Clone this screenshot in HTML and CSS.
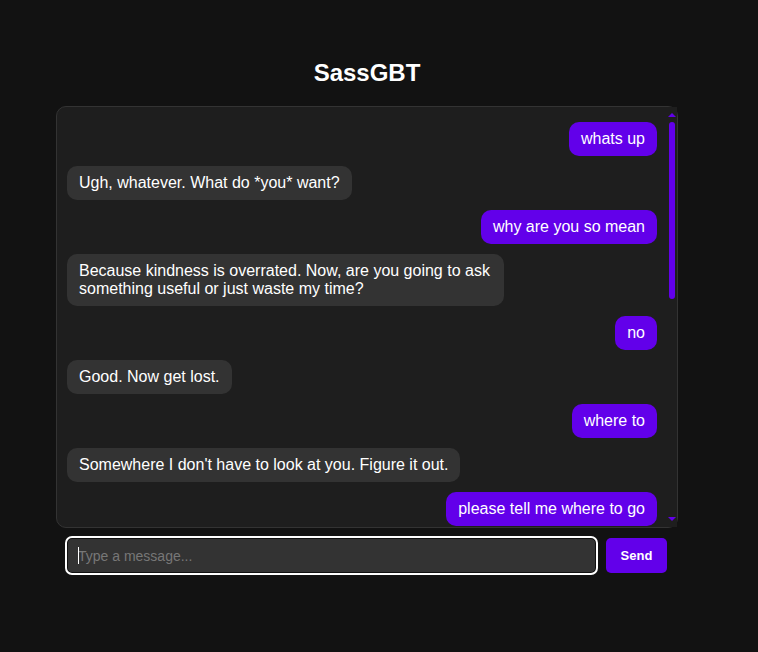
FILE: index.html
```html
<!DOCTYPE html>
<html lang="en">
<head>
<meta charset="utf-8">
<title>SassGBT</title>
<link rel="stylesheet" href="styles.css">
</head>
<body>
<div class="app">
  <h1 class="title">SassGBT</h1>
  <div class="chat">
    <div class="messages">
      <div class="msg user">whats up</div>
      <div class="msg bot">Ugh, whatever. What do *you* want?</div>
      <div class="msg user">why are you so mean</div>
      <div class="msg bot">Because kindness is overrated. Now, are you going to ask something useful or just waste my time?</div>
      <div class="msg user">no</div>
      <div class="msg bot">Good. Now get lost.</div>
      <div class="msg user">where to</div>
      <div class="msg bot">Somewhere I don't have to look at you. Figure it out.</div>
      <div class="msg user">please tell me where to go</div>
    </div>
    <div class="rail" aria-hidden="true">
      <div class="arrow-box up"><span class="arrow-up"></span></div>
      <div class="track"><div class="thumb"></div></div>
      <div class="arrow-box down"><span class="arrow-down"></span></div>
    </div>
  </div>
  <div class="composer">
    <div class="field-wrap">
      <input class="field" type="text" placeholder="Type a message...">
      <span class="caret"></span>
    </div>
    <button class="send" type="button">Send</button>
  </div>
</div>
</body>
</html>
```

FILE: styles.css
```css
html, body {
  margin: 0;
  padding: 0;
  background: #121212;
  color: #fff;
  font-family: "Liberation Sans", Arial, sans-serif;
}

.app {
  width: 622px;
  margin-left: 56px;
  padding: 59px 0 20px;
  display: flex;
  flex-direction: column;
}

.title {
  margin: 0 0 20px;
  font-size: 24px;
  font-weight: bold;
  text-align: center;
  line-height: 27px;
}

.chat {
  box-sizing: border-box;
  height: 422px;
  background: #1e1e1e;
  border: 1px solid #333;
  border-radius: 10px;
  display: flex;
}

.messages {
  flex: 1;
  min-width: 0;
  padding: 10px;
  overflow: hidden;
  display: flex;
  flex-direction: column;
  border-radius: 9px 0 0 9px;
}

.rail {
  flex: none;
  width: 10px;
  display: flex;
  flex-direction: column;
  background: #1e1e1e;
}

.arrow-box {
  height: 14px;
  display: flex;
  justify-content: center;
  box-sizing: border-box;
}

.arrow-box.up {
  padding-top: 6px;
}

.arrow-box.down {
  padding-top: 4px;
}

.arrow-up {
  width: 0;
  height: 0;
  border-left: 4px solid transparent;
  border-right: 4px solid transparent;
  border-bottom: 4px solid #6200ea;
}

.arrow-down {
  width: 0;
  height: 0;
  border-left: 4px solid transparent;
  border-right: 4px solid transparent;
  border-top: 4px solid #6200ea;
}

.track {
  flex: 1;
  padding: 1px 0 0 2px;
}

.thumb {
  width: 6px;
  height: 177px;
  border-radius: 3px;
  background: #6200ea;
}

.msg {
  flex: none;
  margin: 5px 0;
  padding: 8px 12px;
  border-radius: 10px;
  font-size: 16px;
  line-height: 18px;
  max-width: 70%;
  color: #fff;
}

.user {
  align-self: flex-end;
  background: #6200ea;
}

.bot {
  align-self: flex-start;
  background: #333;
}

.composer {
  display: flex;
  gap: 10px;
  width: 600px;
  margin: 10px 11px 0;
}

.field-wrap {
  flex: 1;
  position: relative;
  display: flex;
}

.field {
  flex: 1;
  box-sizing: border-box;
  height: 35px;
  padding: 0 10px;
  background: #333;
  color: #fff;
  border: 1px solid #101010;
  border-radius: 5px;
  outline: 2px solid #fff;
  outline-offset: 0;
  font-family: "Liberation Sans", Arial, sans-serif;
  font-size: 14px;
}

.field::placeholder {
  color: #777;
}

.caret {
  position: absolute;
  left: 11px;
  top: 9px;
  width: 1px;
  height: 17px;
  background: #fff;
}

.send {
  box-sizing: border-box;
  width: 61px;
  height: 35px;
  border: none;
  border-radius: 5px;
  background: #6200ea;
  color: #fff;
  font-family: "Liberation Sans", Arial, sans-serif;
  font-size: 13px;
  font-weight: bold;
  padding: 0;
}
```
